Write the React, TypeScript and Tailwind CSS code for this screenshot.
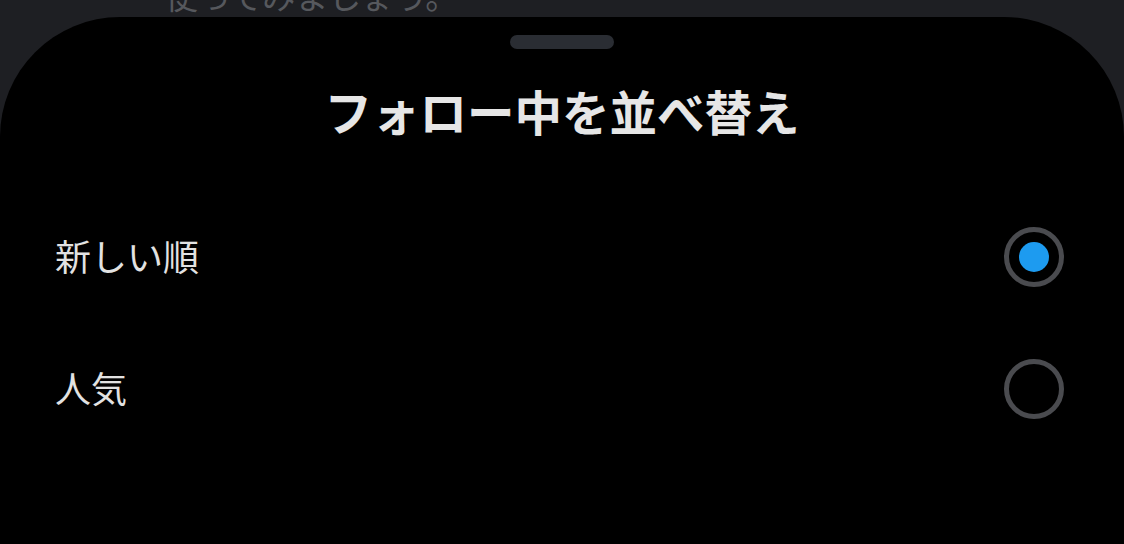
import React from 'react'

const OPTIONS = [
  { label: '新しい順', selected: true },
  { label: '人気', selected: false },
]

function Radio({ selected }: { selected: boolean }) {
  return (
    <div className="flex h-[60px] w-[60px] items-center justify-center rounded-full border-[5px] border-[#4a4b4f]">
      {selected && <div className="h-[30px] w-[30px] rounded-full bg-[#1d9bf0]" />}
    </div>
  )
}

export default function App() {
  return (
    <div
      className="flex h-[544px] w-[1124px] flex-col overflow-hidden bg-[#1e1f23]"
      style={{ fontFamily: '"Noto Sans CJK JP", "Noto Sans", sans-serif' }}
    >
      {/* content behind the sheet */}
      <div className="h-[17px] shrink-0 overflow-hidden pl-[165px]">
        <p className="-mt-[21px] text-[33px] leading-[33px] text-[#56585d]">使ってみましょう。</p>
      </div>

      {/* bottom sheet */}
      <div className="flex flex-1 flex-col items-center rounded-t-[120px] bg-black">
        <div className="mt-[18px] h-[14px] w-[104px] rounded-full bg-[#2a2d33]" />
        <h2 className="mt-[38px] text-[47.5px] font-bold leading-[48px] text-[#e6e6e6]">フォロー中を並べ替え</h2>

        <div className="mt-[56px] flex w-full flex-col">
          {OPTIONS.map((o) => (
            <div key={o.label} className="flex h-[132px] items-center justify-between pl-[55px] pr-[60px]">
              <span className="-mt-[5px] text-[36px] leading-[36px] text-[#e2e2e2]">{o.label}</span>
              <Radio selected={o.selected} />
            </div>
          ))}
        </div>
      </div>
    </div>
  )
}
